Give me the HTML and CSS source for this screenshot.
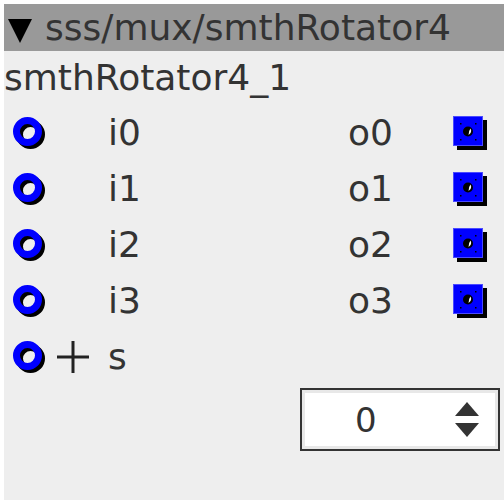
FILE: index.html
```html
<!DOCTYPE html>
<html>
<head>
<meta charset="utf-8">
<link rel="stylesheet" href="styles.css">
</head>
<body>
<div class="node">
  <div class="header">
    <svg class="caret" width="24" height="24" viewBox="0 0 24 24"><polygon points="0,0 24,0 12,24" fill="#000"/></svg>
    <span class="path">sss/mux/smthRotator4</span>
  </div>
  <div class="title">smthRotator4_1</div>
  <div class="rows">
    <div class="row">
      <svg class="ring" width="36" height="34" viewBox="0 0 36 34"><circle cx="17.5" cy="17.5" r="11" fill="none" stroke="#000" stroke-width="7"/><circle cx="14.5" cy="14.5" r="11" fill="none" stroke="#0000ff" stroke-width="7"/></svg>
      <span class="plus"></span>
      <span class="label">i0</span>
      <span class="label">o0</span>
      <svg class="sq" width="36" height="36" viewBox="0 0 36 36"><rect x="4" y="4" width="30" height="30" fill="#000"/><rect x="0.5" y="0.5" width="29" height="29" fill="#0000ff" stroke="#4a4aff"/><circle cx="15" cy="15.5" r="5" fill="#000"/><path d="M15.5 19 Q19.5 16 17.5 12.5 Q15.5 15 15.5 19 Z" fill="#fff"/><rect x="7" y="7" width="1.5" height="1.5" fill="#000"/><rect x="22" y="7" width="1.5" height="1.5" fill="#000"/><rect x="7" y="23" width="1.5" height="1.5" fill="#000"/><rect x="22" y="23" width="1.5" height="1.5" fill="#000"/></svg>
    </div>
    <div class="row">
      <svg class="ring" width="36" height="34" viewBox="0 0 36 34"><circle cx="17.5" cy="17.5" r="11" fill="none" stroke="#000" stroke-width="7"/><circle cx="14.5" cy="14.5" r="11" fill="none" stroke="#0000ff" stroke-width="7"/></svg>
      <span class="plus"></span>
      <span class="label">i1</span>
      <span class="label">o1</span>
      <svg class="sq" width="36" height="36" viewBox="0 0 36 36"><rect x="4" y="4" width="30" height="30" fill="#000"/><rect x="0.5" y="0.5" width="29" height="29" fill="#0000ff" stroke="#4a4aff"/><circle cx="15" cy="15.5" r="5" fill="#000"/><path d="M15.5 19 Q19.5 16 17.5 12.5 Q15.5 15 15.5 19 Z" fill="#fff"/><rect x="7" y="7" width="1.5" height="1.5" fill="#000"/><rect x="22" y="7" width="1.5" height="1.5" fill="#000"/><rect x="7" y="23" width="1.5" height="1.5" fill="#000"/><rect x="22" y="23" width="1.5" height="1.5" fill="#000"/></svg>
    </div>
    <div class="row">
      <svg class="ring" width="36" height="34" viewBox="0 0 36 34"><circle cx="17.5" cy="17.5" r="11" fill="none" stroke="#000" stroke-width="7"/><circle cx="14.5" cy="14.5" r="11" fill="none" stroke="#0000ff" stroke-width="7"/></svg>
      <span class="plus"></span>
      <span class="label">i2</span>
      <span class="label">o2</span>
      <svg class="sq" width="36" height="36" viewBox="0 0 36 36"><rect x="4" y="4" width="30" height="30" fill="#000"/><rect x="0.5" y="0.5" width="29" height="29" fill="#0000ff" stroke="#4a4aff"/><circle cx="15" cy="15.5" r="5" fill="#000"/><path d="M15.5 19 Q19.5 16 17.5 12.5 Q15.5 15 15.5 19 Z" fill="#fff"/><rect x="7" y="7" width="1.5" height="1.5" fill="#000"/><rect x="22" y="7" width="1.5" height="1.5" fill="#000"/><rect x="7" y="23" width="1.5" height="1.5" fill="#000"/><rect x="22" y="23" width="1.5" height="1.5" fill="#000"/></svg>
    </div>
    <div class="row">
      <svg class="ring" width="36" height="34" viewBox="0 0 36 34"><circle cx="17.5" cy="17.5" r="11" fill="none" stroke="#000" stroke-width="7"/><circle cx="14.5" cy="14.5" r="11" fill="none" stroke="#0000ff" stroke-width="7"/></svg>
      <span class="plus"></span>
      <span class="label">i3</span>
      <span class="label">o3</span>
      <svg class="sq" width="36" height="36" viewBox="0 0 36 36"><rect x="4" y="4" width="30" height="30" fill="#000"/><rect x="0.5" y="0.5" width="29" height="29" fill="#0000ff" stroke="#4a4aff"/><circle cx="15" cy="15.5" r="5" fill="#000"/><path d="M15.5 19 Q19.5 16 17.5 12.5 Q15.5 15 15.5 19 Z" fill="#fff"/><rect x="7" y="7" width="1.5" height="1.5" fill="#000"/><rect x="22" y="7" width="1.5" height="1.5" fill="#000"/><rect x="7" y="23" width="1.5" height="1.5" fill="#000"/><rect x="22" y="23" width="1.5" height="1.5" fill="#000"/></svg>
    </div>
    <div class="row">
      <svg class="ring" width="36" height="34" viewBox="0 0 36 34"><circle cx="17.5" cy="17.5" r="11" fill="none" stroke="#000" stroke-width="7"/><circle cx="14.5" cy="14.5" r="11" fill="none" stroke="#0000ff" stroke-width="7"/></svg>
      <span class="plus"><svg width="32" height="32" viewBox="0 0 32 32"><path d="M0 16H32M16 0V32" stroke="#222" stroke-width="3"/></svg></span>
      <span class="label">s</span>
    </div>
  </div>
  <div class="spin">
    <div class="spin-inner">
      <span class="spin-val">0</span>
      <svg class="arrows" width="24" height="36" viewBox="0 0 24 36"><polygon points="12,0 24,14 0,14" fill="#333"/><polygon points="0,21 24,21 12,35" fill="#333"/></svg>
    </div>
  </div>
</div>
</body>
</html>
```

FILE: styles.css
```css
html, body {
  margin: 0;
  padding: 0;
  background: #fff;
}
.node {
  margin: 4px 0 0 4px;
  width: 500px;
  height: 496px;
  background: #eeeeee;
  overflow: hidden;
  font-family: "DejaVu Sans", sans-serif;
  color: #333;
  display: flex;
  flex-direction: column;
}
.header {
  height: 47px;
  flex: none;
  background: #999999;
  display: flex;
  align-items: center;
  padding-left: 4px;
  font-size: 36px;
  white-space: nowrap;
}
.caret {
  display: block;
  margin-top: 7px;
}
.path {
  margin-left: 13px;
  line-height: 47px;
}
.title {
  height: 54px;
  flex: none;
  font-size: 36px;
  line-height: 54px;
  white-space: nowrap;
}
.rows {
  display: flex;
  flex-direction: column;
}
.row {
  height: 56px;
  display: grid;
  grid-template-columns: 36px 60px 240px 104px 40px;
  align-items: center;
  padding-left: 9px;
  font-size: 36px;
}
.ring {
  display: block;
  margin-top: 2px;
}
.plus {
  display: flex;
  align-items: center;
  padding-left: 8px;
}
.plus svg {
  display: block;
}
.label {
  line-height: 56px;
  margin-left: -1px;
}
.sq {
  display: block;
  margin-top: 2px;
}
.spin {
  margin: 3px 4px 0 auto;
  width: 200px;
  height: 63px;
  box-sizing: border-box;
  border: 2px solid #333;
}
.spin-inner {
  height: 100%;
  box-sizing: border-box;
  border: 3px solid #e8e8e8;
  background: #fff;
  display: flex;
  align-items: center;
  justify-content: space-between;
  padding: 0 16px 0 50px;
}
.spin-val {
  font-size: 34px;
  color: #333;
}
.arrows {
  display: block;
}
```
